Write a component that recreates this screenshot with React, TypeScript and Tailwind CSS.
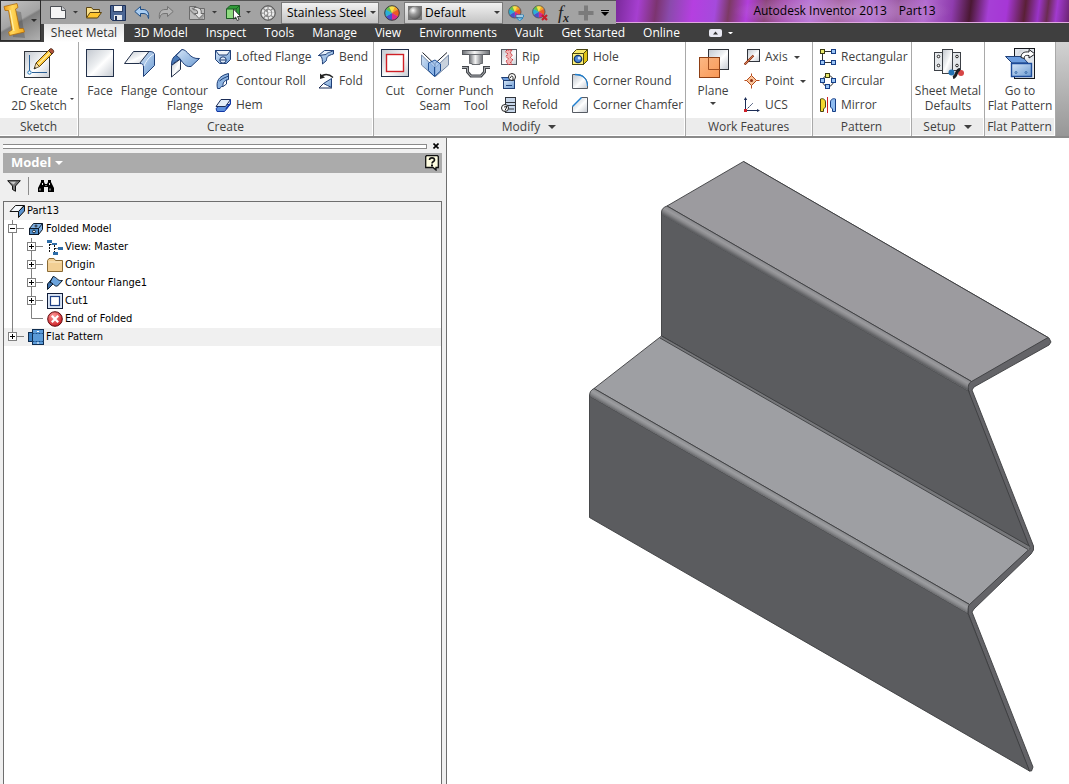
import React from "react";

type Kids = { children: React.ReactNode };

/* ---------- icon frames ---------- */

function Big({ children }: Kids) {
  return (
    <svg width="32" height="32" viewBox="0 0 32 32" fill="none" className="shrink-0" aria-hidden="true">
      {children}
    </svg>
  );
}

function Small({ children }: Kids) {
  return (
    <svg width="16" height="16" viewBox="0 0 16 16" fill="none" className="shrink-0" aria-hidden="true">
      {children}
    </svg>
  );
}

function Caret({ className = "", size = 6 }: { className?: string; size?: number }) {
  return (
    <svg width={size} height={size / 2} viewBox="0 0 6 3" className={"shrink-0 " + className} aria-hidden="true">
      <path d="M0 0H6L3 3Z" fill="currentColor" />
    </svg>
  );
}

function Gradients() {
  return (
    <svg width="0" height="0" className="absolute" aria-hidden="true">
      <defs>
        <linearGradient id="steel" x1="0" y1="0" x2="1" y2="1">
          <stop offset="0" stopColor="#c3c8cf" />
          <stop offset=".45" stopColor="#eef0f2" />
          <stop offset=".55" stopColor="#fff" />
          <stop offset="1" stopColor="#c5cad1" />
        </linearGradient>
        <linearGradient id="blue" x1="0" y1="0" x2="1" y2="1">
          <stop offset="0" stopColor="#d6e6f8" />
          <stop offset="1" stopColor="#6c9bd2" />
        </linearGradient>
        <linearGradient id="orange" x1="0" y1="0" x2="1" y2="1">
          <stop offset="0" stopColor="#fbb27a" />
          <stop offset="1" stopColor="#f98f47" />
        </linearGradient>
        <linearGradient id="punch" x1="0" y1="0" x2="1" y2="0">
          <stop offset="0" stopColor="#6d7075" />
          <stop offset=".45" stopColor="#f4f4f4" />
          <stop offset="1" stopColor="#6d7075" />
        </linearGradient>
        <linearGradient id="gold" x1="0" y1="0" x2="1" y2="0">
          <stop offset="0" stopColor="#f09a12" />
          <stop offset=".4" stopColor="#ffd75a" />
          <stop offset="1" stopColor="#f5a81c" />
        </linearGradient>
        <radialGradient id="ball" cx=".35" cy=".3" r=".8">
          <stop offset="0" stopColor="#fff" />
          <stop offset=".4" stopColor="#9a9a9a" />
          <stop offset="1" stopColor="#4a4a4a" />
        </radialGradient>
        <radialGradient id="red" cx=".4" cy=".3" r=".8">
          <stop offset="0" stopColor="#ff9c9c" />
          <stop offset="1" stopColor="#c40d14" />
        </radialGradient>
      </defs>
    </svg>
  );
}

/* ---------- quick access icons ---------- */

const NewIcon = () => (
  <Small>
    <path d="M.5 1.5H12L15.5 5V13.5H.5Z" fill="#f5f5f5" stroke="#4a4d52" />
    <path d="M11.5 1.5V5.5H15.5" stroke="#4a4d52" fill="#cfd2d6" />
  </Small>
);
const OpenIcon = () => (
  <Small>
    <path d="M.5 12.5V2.5H5.5L7 4.500H13.5V7.5" fill="#f9e08a" stroke="#5b4413" />
    <path d="M.5 13L4 7.500H15.500L11.500 13Z" fill="#ffc62e" stroke="#5b4413" />
  </Small>
);
const SaveIcon = () => (
  <Small>
    <path d="M.5 .5H15.5V15.5H2.5L.5 13.5Z" fill="#4c6795" stroke="#1c2f57" />
    <rect x="3.5" y=".5" width="9" height="6" fill="#f6f6f6" stroke="#2a3d63" />
    <rect x="4" y="10" width="8" height="5" fill="#e8ebf0" />
    <rect x="5" y="11" width="2" height="4" fill="#1c2f57" />
  </Small>
);
const UndoIcon = () => (
  <Small>
    <path d="M.8 6.5L6.5 1.5V4.5H9C13 4.5 15.5 7.5 14.5 13.5C13.5 9.5 12 8.5 9 8.5H6.5V11.5Z" fill="#a9cdf2" stroke="#1f4e86" />
  </Small>
);
const RedoIcon = () => (
  <Small>
    <path d="M15.2 6.5L9.5 1.5V4.5H7C3 4.5 .5 7.5 1.5 13.5C2.5 9.5 4 8.5 7 8.5H9.5V11.5Z" fill="#b4b4b4" stroke="#737373" />
  </Small>
);
const UpdateIcon = () => (
  <Small>
    <path d="M.5 1.5H7L9 3.5H15.5V14.5H.5Z" fill="#bdbdbd" stroke="#6c6c6c" />
    <path d="M1 5L6 10M3 3L5 5M10 13H14M11 11H15" stroke="#858585" strokeWidth="1.2" />
    <path d="M5 2.5C11 2 13 5 12 8.500H15L10 13.5L5.5 8.500H8.5C9 6 8 4.500 5 4.800Z" fill="#e4e4e4" stroke="#5d5d5d" strokeWidth=".9" />
  </Small>
);
const PickIcon = () => (
  <Small>
    <path d="M.5 4L4 .5H13.5V10L10 13.5H.5Z" fill="#2f9a37" stroke="#1d5d25" />
    <path d="M.5 4H10V13.5H.5Z" fill="#8fdb80" stroke="#1d5d25" />
    <path d="M10 4L13.5 .5" stroke="#1d5d25" />
    <path d="M7.5 4V14L9.700 12L11.200 15.500L13 14.700L11.500 11.500H14.500Z" fill="#fff" stroke="#222" strokeWidth=".8" />
  </Small>
);
const MaterialIcon = () => (
  <Small>
    <circle cx="8" cy="8" r="7.300" fill="#8c8c8c" stroke="#5a5a5a" />
    <circle cx="8" cy="8" r="5.300" stroke="#e9e9e9" strokeWidth="2.200" strokeDasharray="3 1.160" />
    <circle cx="8" cy="8" r="2" stroke="#f1f1f1" strokeWidth="2.400" strokeDasharray="2.600 1.590" />
  </Small>
);
const wheel = (
  <>
    <path d="M8 8V.7A7.300 7.300 0 0 1 14.300 4.300Z" fill="#f6a529" />
    <path d="M8 8L14.300 4.300A7.300 7.300 0 0 1 14.300 11.700Z" fill="#ee5a24" />
    <path d="M8 8L14.300 11.700A7.300 7.300 0 0 1 8 15.300Z" fill="#d9268b" />
    <path d="M8 8V15.300A7.300 7.300 0 0 1 1.700 11.700Z" fill="#4652cf" />
    <path d="M8 8L1.700 11.700A7.300 7.300 0 0 1 1.700 4.300Z" fill="#28b0d8" />
    <path d="M8 8L1.700 4.300A7.300 7.300 0 0 1 8 .7Z" fill="#63c04a" />
    <path d="M8 8L5 1.400A7.300 7.300 0 0 1 11 1.400Z" fill="#f7e14b" />
  </>
);
const WheelIcon = () => (
  <Small>
    {wheel}
    <circle cx="8" cy="8" r="7.300" stroke="#3d3d3d" />
  </Small>
);
const WheelAdjustIcon = () => (
  <Small>
    <g transform="scale(.85)">
      {wheel}
      <circle cx="8" cy="8" r="7.300" stroke="#555" />
    </g>
    <path d="M8 10H15.500V12H8Z" fill="#fff" stroke="#1479b8" strokeWidth=".8" />
    <path d="M8.500 13H15L11.700 15.800Z" fill="#8fd4f5" stroke="#1479b8" strokeWidth=".8" />
  </Small>
);
const WheelClearIcon = () => (
  <Small>
    <g transform="scale(.85)">
      {wheel}
      <circle cx="8" cy="8" r="7.300" stroke="#555" />
    </g>
    <path d="M10 10L15 15M15 10L10 15" stroke="#c81e2b" strokeWidth="2.200" />
  </Small>
);
const PlusIcon = () => (
  <Small>
    <path d="M6 .5H10V6H15.500V10H10V15.500H6V10H.5V6H6Z" fill="#7b7b7b" />
  </Small>
);

/* ---------- ribbon icons ---------- */

const SketchIcon = () => (
  <Big>
    <rect x="1.5" y="4.5" width="25" height="26" fill="url(#steel)" stroke="#30343b" />
    <path d="M6.5 8V24M9 25.5H24" stroke="#2a5e93" />
    <circle cx="6.5" cy="25.5" r="1.7" fill="#fff" stroke="#1c72b8" />
    <path d="M11 22L13 16L16.5 19.5Z" fill="#f7dfb0" stroke="#4b3a10" strokeWidth=".8" />
    <path d="M13 16L25.5 3.5L29 7L16.5 19.5Z" fill="#ffc93a" stroke="#5e420c" />
    <path d="M15 17.5L27 5.5" stroke="#fff0a8" strokeWidth="1.2" />
    <path d="M25.5 3.5L27 2C28.5 .8 31.5 3.5 30.5 5.3L29 7Z" fill="#b3543c" stroke="#4f2a18" />
    <path d="M11 22L11.7 19.8L13.2 21.3Z" fill="#222" />
  </Big>
);
const FaceIcon = () => (
  <Big>
    <rect x="2.5" y="2.5" width="27" height="27" fill="url(#steel)" stroke="#22304a" />
  </Big>
);
const FlangeIcon = () => (
  <Big>
    <path d="M15 4.5H26C29 4.5 31.5 5 31.5 8V18.5L20.5 29.5V20C20.5 17.5 19.5 16.5 17 16.5Z" fill="url(#blue)" stroke="#1f3f77" />
    <path d="M10.5 4.5H26L16.5 16.5H1.5Z" fill="url(#steel)" stroke="#22304a" />
    <path d="M21 19C23 14 27 9 31 7" stroke="#eaf3fd" />
  </Big>
);
const ContourFlangeIcon = () => (
  <Big>
    <path d="M2.5 18.5L11.5 12V22.5L2.5 30Z" fill="url(#steel)" stroke="#22304a" />
    <path d="M2.5 18.5C2.5 11 5 10 8 7L13 2.5L17 7L11.5 15V12C9 13 4 16 2.5 18.5Z" fill="#4a7ab8" stroke="#1f3f77" />
    <path d="M13 2.5C19 2.5 20 12.500 30.500 11.500L22 19.500C14 21 12.500 10.500 7 8.500Z" fill="url(#blue)" stroke="#1f3f77" />
  </Big>
);
const CutIcon = () => (
  <Big>
    <rect x="2.5" y="2.5" width="27" height="27" fill="url(#steel)" stroke="#22304a" />
    <rect x="7.5" y="7.5" width="17" height="17" fill="#fff" stroke="#cf1f26" strokeWidth="1.4" />
  </Big>
);
const SeamIcon = () => (
  <Big>
    <path d="M2.5 8L15.5 20.5V29.5L2.5 18Z" fill="url(#blue)" stroke="#7488a5" />
    <path d="M29.5 8L16.5 20.5V29.5L29.5 18Z" fill="#c9d2dd" stroke="#7488a5" />
    <path d="M3.5 5.5L15.5 17L28 5.5" stroke="#1b1f27" />
    <path d="M16 17V21" stroke="#1b1f27" />
    <path d="M9.500 16L16 13L21.500 17V24L15.500 29.500L9.500 23.500Z" fill="#8db6e8" fillOpacity=".75" stroke="#1f4f95" />
    <path d="M15.5 20V29" stroke="#1f4f95" />
  </Big>
);
const PunchIcon = () => (
  <Big>
    <rect x="2.5" y="3.5" width="27" height="4" fill="url(#punch)" stroke="#55585d" />
    <path d="M9.5 7.5H22.5V16.5H20V17.5H12V16.5H9.5Z" fill="url(#punch)" stroke="#6a6d72" />
    <path d="M2 20.5H7.5V25L11 29H21L24.5 25V20.5H30" stroke="#44474c" strokeWidth="3" />
    <path d="M2 20.5H7.5V25L11 29H21L24.5 25V20.5H30" stroke="#a9acb0" strokeWidth="1" />
  </Big>
);
const PlaneIcon = () => (
  <Big>
    <rect x="11.5" y="2.5" width="20" height="20" fill="url(#steel)" stroke="#30343b" />
    <rect x="2.5" y="10.5" width="20" height="20" fill="url(#orange)" fillOpacity=".92" stroke="#8e3f14" />
    <path d="M11.5 10.5V22.5H22.5" stroke="#a14f1f" />
  </Big>
);
const DefaultsIcon = () => (
  <Big>
    <rect x="2.5" y="5.5" width="26" height="18" fill="#e5e8eb" stroke="#3c4046" />
    <rect x="10.5" y="2.5" width="10" height="24" fill="url(#steel)" stroke="#3c4046" />
    <g fill="#fff" stroke="#222">
      <circle cx="6.5" cy="9.5" r="1.3" />
      <circle cx="6.5" cy="18.5" r="1.3" />
      <circle cx="25" cy="9.5" r="1.3" />
      <circle cx="25" cy="18.5" r="1.3" />
    </g>
    <circle cx="19.5" cy="25.5" r="3" fill="#2472b3" />
    <circle cx="29" cy="26" r="3" fill="#d64545" />
    <path d="M28 22.5C23.500 22.500 25.500 29.500 21 30.500" stroke="#1d1f24" strokeWidth="3" />
  </Big>
);
const GoFlatIcon = () => (
  <Big>
    <rect x="10.5" y="1.5" width="20" height="30" fill="#dfe4ea" stroke="#15181d" />
    <path d="M12 9L16 3H24L28 9L22 15Z" fill="url(#steel)" />
    <path d="M1.5 9.5H18L24 16H8Z" fill="#6d9dde" stroke="#1f3f77" />
    <path d="M7.5 16.5H27.5V29.5H7.5Z" fill="url(#blue)" stroke="#1c4b9a" strokeWidth="1.4" />
    <circle cx="12" cy="25.5" r="1" stroke="#3a6cab" />
    <circle cx="22" cy="25.5" r="1" stroke="#3a6cab" />
    <path d="M17 10.5C17 6 20 4.5 25 5V2.5L31 7L25 11V8.500C21 8 20 9 20.500 11.500Z" fill="#fff" stroke="#1d1f24" />
  </Big>
);

const LoftedIcon = () => (
  <Small>
    <path d="M.5 1.5H15.5V10.5L11.5 14.5H4.5L.5 10.5Z" fill="url(#blue)" stroke="#1f3f77" />
    <path d="M.5 1.5H15.5L12 6H4Z" fill="#eef3f9" stroke="#1f3f77" />
    <circle cx="8" cy="11" r="3.2" fill="#dfeaf7" stroke="#1f3f77" />
    <path d="M4.8 11H11.2" stroke="#1f3f77" />
  </Small>
);
const RollIcon = () => (
  <Small>
    <path d="M2.5 15.5C1 9 3 3 13.5 .5V6.500C9 7.500 7.500 10 8 13.500C6.500 13.500 5.500 13.500 5 15.500Z" fill="#8db4e2" stroke="#1f3f77" />
    <path d="M4.500 8L8 5.500L13.500 3M8 13.500L11.500 11V6.800" stroke="#1f3f77" />
  </Small>
);
const HemIcon = () => (
  <Small>
    <path d="M1 11.5L6 7.5H15L9.500 14.500H2Z" fill="#5c8fdd" stroke="#1237a5" />
    <path d="M6 2.5H15.5L10.5 9.500H1Z" fill="#e3edf8" stroke="#1b2c56" />
    <path d="M15.500 2.500V6.500L11 12" stroke="#1237a5" strokeWidth="1.500" />
  </Small>
);
const BendIcon = () => (
  <Small>
    <path d="M.5 6.5L6.5 1.5H15.5L10.5 6.5Z" fill="#e9f1fa" stroke="#1f3f77" />
    <path d="M.5 6.500C3 6.500 4.500 7.500 4.500 15L8.500 11.500C8.500 8 9.500 6.500 15.500 5V1.500C11 4 9 3.500 8 5.500Z" fill="url(#blue)" stroke="#1f3f77" />
  </Small>
);
const FoldIcon = () => (
  <Small>
    <path d="M5.5 10.5L13.5 5.5V14.5L9.5 12.5Z" fill="url(#blue)" stroke="#1f3f77" />
    <path d="M1 15H14M1 15L5.5 10.500" stroke="#1b2c56" />
    <path d="M2.500 4.500C5 .5 11 .5 15 4.500" stroke="#222" strokeWidth="1.300" />
    <path d="M2 .5V6L7 4.500Z" fill="#222" />
  </Small>
);
const RipIcon = () => (
  <Small>
    <rect x=".5" y=".5" width="15" height="15" fill="url(#steel)" stroke="#565b63" />
    <path d="M6 1L4.5 3L7 5L5 7.5L7.5 10L5 12L7 15.5H11L9.5 13L12 11L9.5 8.5L11.5 6L9 4L11 1Z" fill="#f2b4b4" stroke="#c4232b" strokeDasharray="1.5 .8" />
  </Small>
);
const UnfoldIcon = () => (
  <Small>
    <path d="M.5 4.5H9L12 8H3Z" fill="#6d9dde" stroke="#1f3f77" />
    <rect x="2.5" y="7.5" width="11" height="8" fill="url(#blue)" stroke="#1f3f77" />
    <circle cx="11" cy="4" r="3.500" fill="#fff" stroke="#222" />
    <path d="M9.500 5C9.500 2.500 12 2.500 12 4.500V7" stroke="#222" />
    <path d="M5 12.5H11" stroke="#1f3f77" />
  </Small>
);
const RefoldIcon = () => (
  <Small>
    <rect x="4.5" y=".5" width="10" height="15" fill="#c6d6ea" stroke="#30343b" />
    <path d="M4.5 5.5H14.5M6 8.5H15M6 12H13" stroke="#30343b" />
    <circle cx="4" cy="11" r="3.500" fill="#fff" stroke="#222" />
    <path d="M3 10L6 9.500L4 13.500" stroke="#222" />
  </Small>
);
const HoleIcon = () => (
  <Small>
    <path d="M.5 4.5L4.5 .5H15.5V11.5L11.5 15.5H.5Z" fill="#f7e96b" stroke="#4b4712" />
    <path d="M11.5 4.5L15.5 .5V11.5L11.5 15.5Z" fill="#e0c414" stroke="#4b4712" />
    <rect x=".5" y="4.5" width="11" height="11" fill="#fff27a" stroke="#4b4712" />
    <circle cx="6" cy="10" r="3.7" fill="#4a86d6" stroke="#173667" strokeWidth="1.3" />
    <circle cx="7.200" cy="9" r="1.500" fill="#d4e6fb" />
  </Small>
);
const RoundIcon = () => (
  <Small>
    <path d="M.5 1.5H4C11 1.5 15.5 6 15.5 12V15.5H.5Z" fill="url(#steel)" stroke="#565b63" />
    <path d="M3 1.5C11 1.5 15.5 6 15.5 13" stroke="#1f7fd0" strokeWidth="1.3" />
  </Small>
);
const ChamferIcon = () => (
  <Small>
    <path d="M.5 9.5L9.5 .5H15.5V15.5H.5Z" fill="url(#steel)" stroke="#565b63" />
    <path d="M.5 9.5L9.5 .5" stroke="#1f7fd0" strokeWidth="1.4" />
  </Small>
);
const AxisIcon = () => (
  <Small>
    <rect x="3.5" y=".5" width="12" height="12" fill="url(#steel)" stroke="#30343b" />
    <path d="M.5 15.5L9.5 6.5" stroke="#8d2f12" strokeWidth="2.2" />
    <path d="M1 15L9 7" stroke="#f4a070" strokeWidth=".7" />
  </Small>
);
const PointIcon = () => (
  <Small>
    <path d="M7.5 .5V15.5M.5 7.5H15.5" stroke="#b54a1b" />
    <path d="M7.5 2.500L12.500 7.500L7.500 12.500L2.500 7.500Z" fill="#fac59a" stroke="#b54a1b" />
    <circle cx="7.500" cy="7.500" r="1.500" fill="#8d2f12" />
  </Small>
);
const UcsIcon = () => (
  <Small>
    <path d="M1.5 2V13.5H15" stroke="#1b2c56" />
    <path d="M1.5 0L3.2 3H-.2ZM16 13.5L13 12V15Z" fill="#1b2c56" />
    <path d="M2 13L9 6" stroke="#1b2c56" strokeDasharray="2 1" />
    <rect x="0" y="12" width="3" height="3" fill="#cf1f26" />
  </Small>
);
const RectPatternIcon = () => (
  <Small>
    <path d="M2.5 3V13M5 2.5H11M5 13.5H11" stroke="#333" />
    <rect x=".5" y=".5" width="4" height="4" fill="#e9e86a" stroke="#3d3d10" />
    <g fill="#9cc5f5" stroke="#163e86">
      <rect x="11.5" y=".5" width="4" height="4" />
      <rect x=".5" y="11.5" width="4" height="4" />
      <rect x="11.5" y="11.5" width="4" height="4" />
    </g>
  </Small>
);
const CircPatternIcon = () => (
  <Small>
    <circle cx="8" cy="8" r="5.5" stroke="#333" />
    <rect x="5.5" y=".5" width="4" height="4" fill="#e9e86a" stroke="#3d3d10" />
    <g fill="#9cc5f5" stroke="#163e86">
      <rect x=".5" y="5.5" width="4" height="4" />
      <rect x="11.5" y="5.5" width="4" height="4" />
      <rect x="5.5" y="11.5" width="4" height="4" />
    </g>
  </Small>
);
const MirrorIcon = () => (
  <Small>
    <path d="M.5 2C3 1 5.5 2.500 5.500 5V10L3.500 12V14.500H.5Z" fill="#f4d92f" stroke="#4b4712" />
    <path d="M15.500 2C13 1 10.500 2.500 10.500 5V10L12.500 12V14.500H15.500Z" fill="#8fbcf0" stroke="#163e86" />
    <path d="M7.5 0V16" stroke="#cf1f26" />
  </Small>
);

/* ---------- browser tree icons ---------- */

const PartIcon = () => (
  <Small>
    <path d="M6.500 2.500H15L9.500 8.500H1Z" fill="#f4f8fc" stroke="#111" />
    <path d="M15.500 2.500V8L9.500 14.500V8.500Z" fill="#5b93cf" stroke="#111" />
  </Small>
);
const FoldedIcon = () => (
  <Small>
    <path d="M1.500 7.500L5.500 2.500H14.500V8.500L10.500 13.500H1.500Z" fill="#7fb0e2" stroke="#0c1a2c" />
    <path d="M1.500 7.500H10.500V13.500M10.500 7.500L14.500 2.500" stroke="#0c1a2c" />
    <rect x="1.500" y="7.500" width="9" height="6" fill="#4f8dc9" stroke="#0c1a2c" />
    <circle cx="6" cy="10.500" r="1.400" fill="#fff" stroke="#0c1a2c" />
    <circle cx="8" cy="5" r="1" fill="#fff" stroke="#0c1a2c" />
  </Small>
);
const ViewIcon = () => (
  <Small>
    <path d="M2.5 2V13M2.5 5.5H5M7.5 6V14M7.500 9.500H11M7.500 13.500H10" stroke="#111" strokeDasharray="2 1" />
    <rect x="0" y="1" width="5" height="3" fill="#2e6da8" />
    <rect x="5" y="4" width="5" height="2" fill="#2e6da8" />
    <rect x="11" y="8" width="5" height="3" fill="#2e6da8" />
    <rect x="6" y="13" width="5" height="3" fill="#2e6da8" />
  </Small>
);
const FolderIcon = () => (
  <Small>
    <path d="M.5 3.5L2 1.5H7L8.5 3.5H15.5V14.5H.5Z" fill="#f2cf94" stroke="#8a6a35" />
    <path d="M1.5 5H14.5" stroke="#fbe9c6" />
  </Small>
);
const TreeFlangeIcon = () => (
  <Small>
    <path d="M.5 14.5V9L6 2.5L9 6L4 11Z" fill="#3c6ea8" stroke="#0c1a2c" />
    <path d="M6 1.5C10 2 10.500 6.500 15.500 5.500L10.500 11C7 12 6.500 7.500 3 7.500Z" fill="#6ba3dc" stroke="#0c1a2c" />
  </Small>
);
const TreeCutIcon = () => (
  <Small>
    <rect x=".5" y=".5" width="15" height="15" fill="#dbe6f5" stroke="#111d3a" />
    <rect x="3.5" y="3.5" width="9" height="9" fill="#fff" stroke="#1d3f85" strokeWidth="1.2" />
  </Small>
);
const EndIcon = () => (
  <Small>
    <circle cx="8" cy="8" r="7.3" fill="url(#red)" stroke="#5f0a0d" />
    <path d="M4.8 4.8L11.2 11.2M11.2 4.8L4.8 11.2" stroke="#fff" strokeWidth="2.2" />
  </Small>
);
const FlatIcon = () => (
  <Small>
    <rect x=".5" y="3.5" width="15" height="9" fill="#3f82c4" stroke="#0f2d50" />
    <rect x="4.5" y=".5" width="11" height="15" fill="#5b9bd8" stroke="#0f2d50" />
    <path d="M4.5 4.5H15.5M4.5 12.5H15.5" stroke="#1b4d84" strokeDasharray="2 1" />
    <path d="M9 2.5H11M9 14H11" stroke="#fff" />
  </Small>
);

/* ---------- ribbon parts ---------- */

function Panel({ title, menu, width, children }: Kids & { title: string; menu?: boolean; width: string }) {
  return (
    <section className={"flex shrink-0 flex-col border-r border-[#a9a9a9] " + width}>
      <div className="flex h-[76px] pt-[3px]">{children}</div>
      <h2 className="mr-px flex h-[17px] items-center justify-center gap-2 bg-[#ececec]">
        {title}
        {menu && <Caret size={8} />}
      </h2>
    </section>
  );
}

function BigButton({
  icon,
  lines,
  width,
  menu,
}: {
  icon: React.ReactNode;
  lines: string[];
  width: string;
  menu?: "side" | "below";
}) {
  return (
    <button type="button" className={"relative flex shrink-0 flex-col items-center leading-[15px] whitespace-nowrap " + width}>
      <span className="flex h-[38px] items-center pb-0.5">{icon}</span>
      {lines.map((l) => (
        <span key={l}>{l}</span>
      ))}
      {menu === "below" && <Caret className="mt-1" />}
      {menu === "side" && <Caret className="absolute right-0 bottom-[18px]" size={4} />}
    </button>
  );
}

function SmallButton({ icon, label, menu }: { icon: React.ReactNode; label: string; menu?: boolean }) {
  return (
    <button type="button" className="flex h-6 items-center gap-[5px] whitespace-nowrap">
      {icon}
      {label}
      {menu && <Caret className="ml-px" />}
    </button>
  );
}

function Column({ children, width }: Kids & { width: string }) {
  return <div className={"flex shrink-0 flex-col items-start " + width}>{children}</div>;
}

/* ---------- browser tree ---------- */

function Guide({ kind }: { kind: "line" | "plus" | "minus" | "last" | "plusLast" }) {
  if (kind === "line") {
    return (
      <svg width="19" height="18" className="shrink-0" aria-hidden="true">
        <path d="M8.5 0V18" stroke="#808080" />
      </svg>
    );
  }
  const box = kind !== "last";
  const ends = kind === "last" || kind === "plusLast";
  return (
    <svg width="24" height="18" fill="none" className="shrink-0" aria-hidden="true">
      <path d={ends ? "M8.5 0V8.5H20" : "M8.5 0V18M8.5 8.5H20"} stroke="#808080" />
      {box && (
        <>
          <rect x="4.5" y="4.5" width="8" height="8" fill="#fff" stroke="#808080" />
          <path d={kind === "minus" ? "M6 8.5H11" : "M6 8.5H11M8.5 6V11"} stroke="#000" />
        </>
      )}
    </svg>
  );
}

function Node({ guides, icon, label, shaded }: { guides?: React.ReactNode; icon: React.ReactNode; label: string; shaded?: boolean }) {
  return (
    <div className={"flex h-[18px] items-center whitespace-nowrap " + (shaded ? "bg-[#f0f0f0]" : "")}>
      {guides}
      {icon}
      <span className="ml-0.5 pt-px">{label}</span>
    </div>
  );
}

function Child({ icon, label, last }: { icon: React.ReactNode; label: string; last?: boolean }) {
  return (
    <li>
      <Node
        guides={
          <>
            <Guide kind="line" />
            <Guide kind={last ? "last" : "plus"} />
          </>
        }
        icon={icon}
        label={label}
      />
    </li>
  );
}

function ModelBrowser() {
  return (
    <aside className="flex w-[446px] shrink-0 flex-col bg-[#efefef] pt-[3px] pr-1 pl-[3px]">
      <div className="flex h-3 items-center gap-[6px] pr-[3px] pb-[2px]">
        <div className="h-[5px] flex-1 border-y border-r border-[#8a8a8a] bg-white" />
        <button type="button" aria-label="Close" className="text-black">
          <svg width="6" height="6" viewBox="0 0 6 6" aria-hidden="true">
            <path d="M.5 .5L5.5 5.5M5.5 .5L.5 5.5" stroke="currentColor" strokeWidth="1.6" />
          </svg>
        </button>
      </div>
      <div className="flex h-5 items-center justify-between bg-[#ababab] pr-[3px] pl-2">
        <button type="button" className="flex items-center gap-1 text-[13px] font-bold text-white">
          Model
          <Caret size={8} />
        </button>
        <button type="button" aria-label="Help">
          <svg width="14" height="16" viewBox="0 0 14 16" fill="none" aria-hidden="true">
            <path d="M1.5 .7H12.5L13.3 1.5V12.5H11V15L8 12.5H.7V1.5Z" fill="#fffde0" stroke="#111" strokeWidth="1.3" />
            <path d="M4.5 5C4.5 2.2 9.5 2.2 9.5 5C9.5 6.6 7 6.500 7 8.500" stroke="#111" strokeWidth="1.600" />
            <rect x="6" y="9.5" width="2" height="2" fill="#111" />
          </svg>
        </button>
      </div>
      <div className="flex h-7 items-center pb-0.5 pl-1">
        <button type="button" aria-label="Filter">
          <svg width="14" height="12" viewBox="0 0 14 12" aria-hidden="true">
            <path d="M.7 .7H13.3L8.5 6V11.3L5.5 9.500V6Z" fill="#777" stroke="#111" />
            <path d="M3 1.8H9L6.5 4.5Z" fill="#c9c9c9" />
          </svg>
        </button>
        <span className="mx-[7px] h-[18px] w-px bg-[#8c8c8c]" />
        <button type="button" aria-label="Find" className="ml-0.5">
          <svg width="16" height="14" viewBox="0 0 16 14" aria-hidden="true">
            <path d="M3 1H6V3L7 5H9L10 3V1H13V3L16 9V13H10V8H6V13H0V9L3 3Z" fill="#000" />
            <path d="M2 9.5V11.5M4.5 4V6M11.5 4V6M12 9.5V11.5M8 6V7" stroke="#fff" strokeWidth=".9" />
          </svg>
        </button>
      </div>
      <div className="flex-1 border-x border-t border-[#6e6e6e] bg-white font-['DejaVu_Sans_Condensed','Noto_Sans',sans-serif] text-[11px] text-black">
        <div className="flex h-[18px] items-center bg-[#f0f0f0] pl-[5px] whitespace-nowrap">
          <PartIcon />
          <span className="ml-0.5 pt-px">Part13</span>
        </div>
        <ul>
          <li>
            <Node guides={<Guide kind="minus" />} icon={<FoldedIcon />} label="Folded Model" />
            <ul>
              <Child icon={<ViewIcon />} label="View: Master" />
              <Child icon={<FolderIcon />} label="Origin" />
              <Child icon={<TreeFlangeIcon />} label="Contour Flange1" />
              <Child icon={<TreeCutIcon />} label="Cut1" />
              <Child icon={<EndIcon />} label="End of Folded" last />
            </ul>
          </li>
          <li>
            <Node guides={<Guide kind="plusLast" />} icon={<FlatIcon />} label="Flat Pattern" shaded />
          </li>
        </ul>
      </div>
    </aside>
  );
}

/* ---------- model drawing ---------- */

function PartModel() {
  return (
    <svg viewBox="447 138 622 646" className="h-full w-full" preserveAspectRatio="xMidYMid meet" role="img" aria-label="Folded sheet metal part">
      <defs>
        <linearGradient id="bendA" gradientUnits="userSpaceOnUse" x1="820" y1="294" x2="815.400" y2="302">
          <stop offset="0" stopColor="#89898d" />
          <stop offset=".4" stopColor="#9a9a9d" />
          <stop offset=".65" stopColor="#88888b" />
          <stop offset="1" stopColor="#5f6063" />
        </linearGradient>
        <linearGradient id="bendB" gradientUnits="userSpaceOnUse" x1="781.750" y1="496.500" x2="777.200" y2="504.400">
          <stop offset="0" stopColor="#898a8d" />
          <stop offset=".4" stopColor="#9c9da0" />
          <stop offset=".65" stopColor="#8a8b8e" />
          <stop offset="1" stopColor="#5f6063" />
        </linearGradient>
      </defs>
      <g stroke="#3c3d40" strokeWidth=".9" strokeLinejoin="round">
        <path d="M743.500 161.500L1049 338L1051 342L1049 345L974 387L972 390L1033.500 546V550L1031 554L974 609L972 612L1033 767L1031.500 771H1029L968 613L969 391Z" fill="#646468" />
        <path d="M661.500 214L968.500 391L1030 548.500L661.500 336Z" fill="#5b5c5f" />
        <path d="M743.500 161.500L1048 337.500L971.500 381.500L667 206Z" fill="#9c9b9f" />
        <path d="M667 206L971.500 381.500C968.500 383 968 386 968.500 391L661.500 214.500V212C661.500 209 664 207 667 206Z" fill="url(#bendA)" stroke="none" />
        <path d="M667 206L971.500 381.500C968.500 383 968 386 968.500 391M661.500 214.500V212C661.500 209 664 207 667 206" fill="none" />
        <path d="M661.500 336L1030 548.500L969.500 604.500L594 388.500Z" fill="#9e9fa3" />
        <path d="M661.500 336L1030 546.500L1029 550L660 338Z" fill="#77787b" stroke="none" />
        <path d="M661.500 336L1030 546.500M660 338L1028 549.500" fill="none" />
        <path d="M589.500 396L968 613.500L1029.500 771L589.500 517.500Z" fill="#5b5c5f" />
        <path d="M594 388.500L969.500 604.500C968 606 968 609 968 613.500L589.500 396C589.500 392 591 390 594 388.500Z" fill="url(#bendB)" stroke="none" />
        <path d="M594 388.500L969.500 604.500C968 606 968 609 968 613.500M589.500 396C589.500 392 591 390 594 388.500" fill="none" />
      </g>
    </svg>
  );
}

/* ---------- page ---------- */

const tabs = ["3D Model", "Inspect", "Tools", "Manage", "View", "Environments", "Vault", "Get Started", "Online"];

function QuickButton({ label, children, className = "" }: Kids & { label: string; className?: string }) {
  return (
    <button type="button" aria-label={label} className={"flex shrink-0 items-center " + className}>
      {children}
    </button>
  );
}

export default function App() {
  return (
    <div className="flex h-screen flex-col overflow-hidden bg-white font-['Open_Sans','Noto_Sans',sans-serif] text-[12px] text-[#3f3f3f]">
      <Gradients />
      <header className="flex h-[42px] shrink-0 bg-[#3f3f3f]">
        <button
          type="button"
          aria-label="Application menu"
          className="flex h-[41px] w-[41px] shrink-0 items-center border border-[#2c2c2c] bg-[linear-gradient(150deg,#c4c4c4_0%,#a4a4a4_48%,#7f7f7f_52%,#b0b0b0_100%)] text-[#2c2c2c]"
        >
          <svg width="28" height="38" viewBox="0 0 28 38" aria-hidden="true">
            <path d="M10 8L12 35L24 36L20 10Z" fill="#444" opacity=".35" />
            <path d="M3 4.500L16 1.500L17 5.500L14.500 7L18.500 26.500L22.500 26.500L23.500 30L8.500 33.500L7.500 30L11 28L7.500 8.500L4 8.500Z" fill="url(#gold)" stroke="#b06c0c" strokeWidth=".8" />
            <path d="M9 8L13 29" stroke="#fff0ac" strokeWidth="1.200" />
          </svg>
          <Caret className="ml-0.5" size={6} />
        </button>
        <div className="flex min-w-0 flex-1 flex-col">
          <div className="flex h-6 min-w-0">
            <div className="flex h-6 w-[575px] shrink-0 items-center border-t border-[#555] bg-[#a3a3a3] pl-[9px] text-[#3a3a3a]">
              <QuickButton label="New"><NewIcon /></QuickButton>
              <Caret className="mx-[7px]" size={5} />
              <QuickButton label="Open" className="ml-px"><OpenIcon /></QuickButton>
              <QuickButton label="Save" className="ml-2"><SaveIcon /></QuickButton>
              <QuickButton label="Undo" className="ml-2"><UndoIcon /></QuickButton>
              <QuickButton label="Redo" className="ml-2"><RedoIcon /></QuickButton>
              <QuickButton label="Update" className="ml-[15px]"><UpdateIcon /></QuickButton>
              <Caret className="ml-[7px]" size={5} />
              <QuickButton label="Select" className="ml-[9px]"><PickIcon /></QuickButton>
              <Caret className="ml-1" size={5} />
              <QuickButton label="Material browser" className="ml-[9px]"><MaterialIcon /></QuickButton>
              <div className="relative ml-[5px] flex h-[22px] w-[98px] items-center border border-[#7a7a7a] bg-[linear-gradient(#f2f2f2,#c4c4c4)]">
                <select aria-label="Material" className="h-full w-full appearance-none pl-[5px] text-black">
                  <option>Stainless Steel</option>
                </select>
                <Caret className="pointer-events-none absolute right-0.5" size={6} />
              </div>
              <QuickButton label="Appearance browser" className="ml-[5px]"><WheelIcon /></QuickButton>
              <div className="relative ml-1 flex h-[22px] w-[99px] items-center border border-[#7a7a7a] bg-[linear-gradient(#f2f2f2,#c4c4c4)]">
                <svg width="14" height="14" viewBox="0 0 14 14" className="pointer-events-none absolute left-[3px]" aria-hidden="true">
                  <rect width="14" height="14" fill="#777" />
                  <circle cx="7" cy="7" r="6.5" fill="url(#ball)" />
                </svg>
                <select aria-label="Appearance" className="h-full w-full appearance-none pl-5 text-black">
                  <option>Default</option>
                </select>
                <Caret className="pointer-events-none absolute right-0.5" size={6} />
              </div>
              <QuickButton label="Adjust" className="ml-[5px]"><WheelAdjustIcon /></QuickButton>
              <QuickButton label="Clear" className="ml-2"><WheelClearIcon /></QuickButton>
              <button type="button" className="ml-[10px] shrink-0 font-['Liberation_Serif',serif] text-[18px] leading-5 text-[#222] italic">
                f<sub className="text-[12px] font-bold">x</sub>
              </button>
              <QuickButton label="Add" className="ml-[9px]"><PlusIcon /></QuickButton>
              <button type="button" aria-label="Customize" className="ml-[7px] flex flex-col items-center gap-px text-black">
                <span className="h-px w-2 bg-black" />
                <Caret size={8} />
              </button>
            </div>
            <div className="flex h-[23px] min-w-0 flex-1 items-center justify-center gap-3 border-b border-[#e0a8e0] bg-[radial-gradient(ellipse_110px_16px_at_50%_50%,#c592cfcc,transparent),linear-gradient(97deg,#7a2a9a_0%,#a63fd0_5%,#7c3470_9%,#8a4aac_12%,#b53fe0_17%,#a54adc_22%,#7c3a64_25%,#b23fdc_29%,#8a4478_33%,#a64fb0_37%,#b872dc_43%,#9d5a96_49%,#b46fd8_56%,#97569f_62%,#b36cd0_68%,#8f3cae_74%,#4a1833_78%,#a63fd6_82%,#a637d6_86%,#5a2036_90%,#9a34c9_93%,#6a2c50_95%,#a23ad0_97%,#6b2470_100%)] pl-1 text-black">
              <span>Autodesk Inventor 2013</span>
              <span>Part13</span>
            </div>
          </div>
          <nav className="flex h-[18px] items-center whitespace-nowrap text-white">
            <a href="#sheet-metal" className="mr-px ml-[3px] flex h-full w-20 items-center justify-center bg-[linear-gradient(#e4e4e4,#fff)] text-[#333]">
              Sheet Metal
            </a>
            {tabs.map((t) => (
              <a key={t} href={"#" + t.toLowerCase().replace(" ", "-")} className="px-[9px]">
                {t}
              </a>
            ))}
            <button type="button" aria-label="Minimize ribbon" className="ml-5 flex items-center gap-[6px]">
              <svg width="13" height="8" viewBox="0 0 13 8" aria-hidden="true">
                <rect width="13" height="8" rx="2" fill="#e9e9f2" />
                <path d="M4 5.5H9L6.5 2.5Z" fill="#333" />
              </svg>
              <Caret size={5} />
            </button>
          </nav>
        </div>
      </header>

      <div className="flex h-[96px] shrink-0 border-b-2 border-[#8a8a8a] bg-white">
        <Panel title="Sketch" width="w-[79px]">
          <BigButton icon={<SketchIcon />} lines={["Create", "2D Sketch"]} width="ml-1 w-[70px]" menu="side" />
        </Panel>
        <Panel title="Create" width="w-[295px]">
          <BigButton icon={<FaceIcon />} lines={["Face"]} width="ml-[3px] w-9" />
          <BigButton icon={<FlangeIcon />} lines={["Flange"]} width="w-[42px]" />
          <BigButton icon={<ContourFlangeIcon />} lines={["Contour", "Flange"]} width="w-[50px]" />
          <Column width="ml-[5px] w-[103px]">
            <SmallButton icon={<LoftedIcon />} label="Lofted Flange" />
            <SmallButton icon={<RollIcon />} label="Contour Roll" />
            <SmallButton icon={<HemIcon />} label="Hem" />
          </Column>
          <Column width="w-[50px]">
            <SmallButton icon={<BendIcon />} label="Bend" />
            <SmallButton icon={<FoldIcon />} label="Fold" />
          </Column>
        </Panel>
        <Panel title="Modify" menu width="w-[312px]">
          <BigButton icon={<CutIcon />} lines={["Cut"]} width="ml-px w-10" />
          <BigButton icon={<SeamIcon />} lines={["Corner", "Seam"]} width="w-10" />
          <BigButton icon={<PunchIcon />} lines={["Punch", "Tool"]} width="w-[42px]" />
          <Column width="ml-1 w-[71px]">
            <SmallButton icon={<RipIcon />} label="Rip" />
            <SmallButton icon={<UnfoldIcon />} label="Unfold" />
            <SmallButton icon={<RefoldIcon />} label="Refold" />
          </Column>
          <Column width="w-[110px]">
            <SmallButton icon={<HoleIcon />} label="Hole" />
            <SmallButton icon={<RoundIcon />} label="Corner Round" />
            <SmallButton icon={<ChamferIcon />} label="Corner Chamfer" />
          </Column>
        </Panel>
        <Panel title="Work Features" width="w-[127px]">
          <BigButton icon={<PlaneIcon />} lines={["Plane"]} width="w-[54px]" menu="below" />
          <Column width="ml-1 w-16">
            <SmallButton icon={<AxisIcon />} label="Axis" menu />
            <SmallButton icon={<PointIcon />} label="Point" menu />
            <SmallButton icon={<UcsIcon />} label="UCS" />
          </Column>
        </Panel>
        <Panel title="Pattern" width="w-[99px]">
          <Column width="ml-[7px] w-[90px]">
            <SmallButton icon={<RectPatternIcon />} label="Rectangular" />
            <SmallButton icon={<CircPatternIcon />} label="Circular" />
            <SmallButton icon={<MirrorIcon />} label="Mirror" />
          </Column>
        </Panel>
        <Panel title="Setup" menu width="w-[73px]">
          <BigButton icon={<DefaultsIcon />} lines={["Sheet Metal", "Defaults"]} width="w-[72px]" />
        </Panel>
        <Panel title="Flat Pattern" width="w-[71px]">
          <BigButton icon={<GoFlatIcon />} lines={["Go to", "Flat Pattern"]} width="w-[70px]" />
        </Panel>
        <div className="flex-1 bg-[linear-gradient(#d2d2d2,#979797)]" />
      </div>

      <main className="flex min-h-0 flex-1">
        <ModelBrowser />
        <div className="min-w-0 flex-1 border-l border-[#6e6e6e] bg-white">
          <PartModel />
        </div>
      </main>
    </div>
  );
}
